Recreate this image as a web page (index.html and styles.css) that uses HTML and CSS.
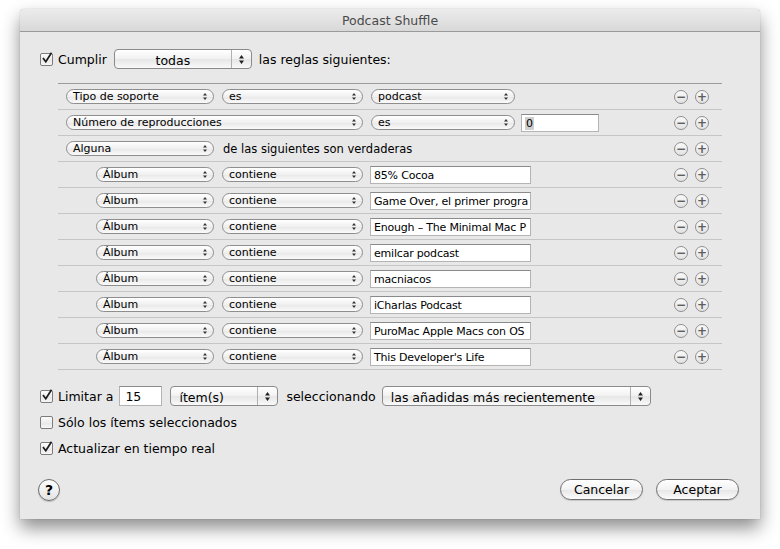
FILE: index.html
```html
<!DOCTYPE html>
<html>
<head>
<meta charset="utf-8">
<link rel="stylesheet" href="styles.css">
</head>
<body>
<div class="window">
  <div class="titlebar">Podcast Shuffle</div>
  <div class="content">
    <div class="toprow">
      <span class="check on"><svg width="15" height="15" viewBox="0 0 15 15"><path d="M3 7 L5.8 10.8 L11.5 1.8" fill="none" stroke="#1c1c1c" stroke-width="1.7"/></svg></span>
      <span class="lbl">Cumplir</span>
      <span class="bigpop center w-todas"><span class="ptext">todas</span><span class="parrows"><svg width="7" height="11" viewBox="0 0 7 11"><path d="M3.5 1 L6 4.5 L1 4.5Z M3.5 10 L6 6.5 L1 6.5Z" fill="#222"/></svg></span></span>
      <span class="lbl">las reglas siguientes:</span>
    </div>

    <div class="rules">
      <div class="rule">
        <span class="pop w148"><span class="ptext">Tipo de soporte</span><svg class="sarr" width="6" height="9" viewBox="0 0 6 9"><path d="M3 1 L5 3.5 L1 3.5Z M3 8 L5 5.5 L1 5.5Z" fill="#333"/></svg></span>
        <span class="pop w141"><span class="ptext">es</span><svg class="sarr" width="6" height="9" viewBox="0 0 6 9"><path d="M3 1 L5 3.5 L1 3.5Z M3 8 L5 5.5 L1 5.5Z" fill="#333"/></svg></span>
        <span class="pop w144"><span class="ptext">podcast</span><svg class="sarr" width="6" height="9" viewBox="0 0 6 9"><path d="M3 1 L5 3.5 L1 3.5Z M3 8 L5 5.5 L1 5.5Z" fill="#333"/></svg></span>
        <span class="pm"><span class="circ">&#8722;</span><span class="circ">+</span></span>
      </div>
      <div class="rule">
        <span class="pop w297"><span class="ptext">Número de reproducciones</span><svg class="sarr" width="6" height="9" viewBox="0 0 6 9"><path d="M3 1 L5 3.5 L1 3.5Z M3 8 L5 5.5 L1 5.5Z" fill="#333"/></svg></span>
        <span class="pop w144"><span class="ptext">es</span><svg class="sarr" width="6" height="9" viewBox="0 0 6 9"><path d="M3 1 L5 3.5 L1 3.5Z M3 8 L5 5.5 L1 5.5Z" fill="#333"/></svg></span>
        <span class="field fnum"><span class="sel">0</span></span>
        <span class="pm"><span class="circ">&#8722;</span><span class="circ">+</span></span>
      </div>
      <div class="rule">
        <span class="pop w148"><span class="ptext">Alguna</span><svg class="sarr" width="6" height="9" viewBox="0 0 6 9"><path d="M3 1 L5 3.5 L1 3.5Z M3 8 L5 5.5 L1 5.5Z" fill="#333"/></svg></span>
        <span class="rlbl">de las siguientes son verdaderas</span>
        <span class="pm"><span class="circ">&#8722;</span><span class="circ">+</span></span>
      </div>

      <div class="rule sub">
        <span class="pop w118"><span class="ptext">Álbum</span><svg class="sarr" width="6" height="9" viewBox="0 0 6 9"><path d="M3 1 L5 3.5 L1 3.5Z M3 8 L5 5.5 L1 5.5Z" fill="#333"/></svg></span>
        <span class="pop w141"><span class="ptext">contiene</span><svg class="sarr" width="6" height="9" viewBox="0 0 6 9"><path d="M3 1 L5 3.5 L1 3.5Z M3 8 L5 5.5 L1 5.5Z" fill="#333"/></svg></span>
        <span class="field ftext">85% Cocoa</span>
        <span class="pm"><span class="circ">&#8722;</span><span class="circ">+</span></span>
      </div>
      <div class="rule sub">
        <span class="pop w118"><span class="ptext">Álbum</span><svg class="sarr" width="6" height="9" viewBox="0 0 6 9"><path d="M3 1 L5 3.5 L1 3.5Z M3 8 L5 5.5 L1 5.5Z" fill="#333"/></svg></span>
        <span class="pop w141"><span class="ptext">contiene</span><svg class="sarr" width="6" height="9" viewBox="0 0 6 9"><path d="M3 1 L5 3.5 L1 3.5Z M3 8 L5 5.5 L1 5.5Z" fill="#333"/></svg></span>
        <span class="field ftext">Game Over, el primer progra</span>
        <span class="pm"><span class="circ">&#8722;</span><span class="circ">+</span></span>
      </div>
      <div class="rule sub">
        <span class="pop w118"><span class="ptext">Álbum</span><svg class="sarr" width="6" height="9" viewBox="0 0 6 9"><path d="M3 1 L5 3.5 L1 3.5Z M3 8 L5 5.5 L1 5.5Z" fill="#333"/></svg></span>
        <span class="pop w141"><span class="ptext">contiene</span><svg class="sarr" width="6" height="9" viewBox="0 0 6 9"><path d="M3 1 L5 3.5 L1 3.5Z M3 8 L5 5.5 L1 5.5Z" fill="#333"/></svg></span>
        <span class="field ftext">Enough – The Minimal Mac P</span>
        <span class="pm"><span class="circ">&#8722;</span><span class="circ">+</span></span>
      </div>
      <div class="rule sub">
        <span class="pop w118"><span class="ptext">Álbum</span><svg class="sarr" width="6" height="9" viewBox="0 0 6 9"><path d="M3 1 L5 3.5 L1 3.5Z M3 8 L5 5.5 L1 5.5Z" fill="#333"/></svg></span>
        <span class="pop w141"><span class="ptext">contiene</span><svg class="sarr" width="6" height="9" viewBox="0 0 6 9"><path d="M3 1 L5 3.5 L1 3.5Z M3 8 L5 5.5 L1 5.5Z" fill="#333"/></svg></span>
        <span class="field ftext">emilcar podcast</span>
        <span class="pm"><span class="circ">&#8722;</span><span class="circ">+</span></span>
      </div>
      <div class="rule sub">
        <span class="pop w118"><span class="ptext">Álbum</span><svg class="sarr" width="6" height="9" viewBox="0 0 6 9"><path d="M3 1 L5 3.5 L1 3.5Z M3 8 L5 5.5 L1 5.5Z" fill="#333"/></svg></span>
        <span class="pop w141"><span class="ptext">contiene</span><svg class="sarr" width="6" height="9" viewBox="0 0 6 9"><path d="M3 1 L5 3.5 L1 3.5Z M3 8 L5 5.5 L1 5.5Z" fill="#333"/></svg></span>
        <span class="field ftext">macniacos</span>
        <span class="pm"><span class="circ">&#8722;</span><span class="circ">+</span></span>
      </div>
      <div class="rule sub">
        <span class="pop w118"><span class="ptext">Álbum</span><svg class="sarr" width="6" height="9" viewBox="0 0 6 9"><path d="M3 1 L5 3.5 L1 3.5Z M3 8 L5 5.5 L1 5.5Z" fill="#333"/></svg></span>
        <span class="pop w141"><span class="ptext">contiene</span><svg class="sarr" width="6" height="9" viewBox="0 0 6 9"><path d="M3 1 L5 3.5 L1 3.5Z M3 8 L5 5.5 L1 5.5Z" fill="#333"/></svg></span>
        <span class="field ftext">iCharlas Podcast</span>
        <span class="pm"><span class="circ">&#8722;</span><span class="circ">+</span></span>
      </div>
      <div class="rule sub">
        <span class="pop w118"><span class="ptext">Álbum</span><svg class="sarr" width="6" height="9" viewBox="0 0 6 9"><path d="M3 1 L5 3.5 L1 3.5Z M3 8 L5 5.5 L1 5.5Z" fill="#333"/></svg></span>
        <span class="pop w141"><span class="ptext">contiene</span><svg class="sarr" width="6" height="9" viewBox="0 0 6 9"><path d="M3 1 L5 3.5 L1 3.5Z M3 8 L5 5.5 L1 5.5Z" fill="#333"/></svg></span>
        <span class="field ftext">PuroMac Apple Macs con OS</span>
        <span class="pm"><span class="circ">&#8722;</span><span class="circ">+</span></span>
      </div>
      <div class="rule sub">
        <span class="pop w118"><span class="ptext">Álbum</span><svg class="sarr" width="6" height="9" viewBox="0 0 6 9"><path d="M3 1 L5 3.5 L1 3.5Z M3 8 L5 5.5 L1 5.5Z" fill="#333"/></svg></span>
        <span class="pop w141"><span class="ptext">contiene</span><svg class="sarr" width="6" height="9" viewBox="0 0 6 9"><path d="M3 1 L5 3.5 L1 3.5Z M3 8 L5 5.5 L1 5.5Z" fill="#333"/></svg></span>
        <span class="field ftext">This Developer's Life</span>
        <span class="pm"><span class="circ">&#8722;</span><span class="circ">+</span></span>
      </div>
    </div>

    <div class="opt first">
      <span class="check on"><svg width="15" height="15" viewBox="0 0 15 15"><path d="M3 7 L5.8 10.8 L11.5 1.8" fill="none" stroke="#1c1c1c" stroke-width="1.7"/></svg></span>
      <span class="lbl">Limitar a</span>
      <span class="bfield">15</span>
      <span class="bigpop w-items"><span class="ptext">ítem(s)</span><span class="parrows"><svg width="7" height="11" viewBox="0 0 7 11"><path d="M3.5 1 L6 4.5 L1 4.5Z M3.5 10 L6 6.5 L1 6.5Z" fill="#222"/></svg></span></span>
      <span class="lbl sel-lbl">seleccionando</span>
      <span class="bigpop w-sel"><span class="ptext">las añadidas más recientemente</span><span class="parrows"><svg width="7" height="11" viewBox="0 0 7 11"><path d="M3.5 1 L6 4.5 L1 4.5Z M3.5 10 L6 6.5 L1 6.5Z" fill="#222"/></svg></span></span>
    </div>
    <div class="opt">
      <span class="check"></span>
      <span class="lbl">Sólo los ítems seleccionados</span>
    </div>
    <div class="opt">
      <span class="check on"><svg width="15" height="15" viewBox="0 0 15 15"><path d="M3 7 L5.8 10.8 L11.5 1.8" fill="none" stroke="#1c1c1c" stroke-width="1.7"/></svg></span>
      <span class="lbl">Actualizar en tiempo real</span>
    </div>

    <div class="footer">
      <span class="help">?</span>
      <span class="btn">Cancelar</span>
      <span class="btn">Aceptar</span>
    </div>
  </div>
</div>
</body>
</html>
```
FILE: styles.css
```css
* { box-sizing: border-box; }
html, body { margin: 0; padding: 0; background: #fff; }
body {
  font-family: "DejaVu Sans", "Liberation Sans", sans-serif;
  color: #000;
  width: 780px;
  height: 549px;
  overflow: hidden;
}
.window {
  margin: 9px 0 0 20px;
  width: 740px;
  height: 510px;
  background: #e8e8e8;
  border-radius: 4px 4px 0 0;
  box-shadow: 0 9px 18px rgba(0,0,0,0.45), 0 0 1px rgba(0,0,0,0.35);
  display: flex;
  flex-direction: column;
}
.titlebar {
  height: 23px;
  border-bottom: 1px solid #9a9a9a;
  background: linear-gradient(#ececec, #d8d8d8);
  border-radius: 4px 4px 0 0;
  text-align: center;
  font-size: 12.5px;
  line-height: 24px;
  color: #4a4a4a;
}
.content {
  padding: 0 21px 0 20px;
  display: flex;
  flex-direction: column;
}
.toprow {
  margin-top: 17px;
  height: 20px;
  display: flex;
  align-items: center;
}
.check {
  width: 13px;
  height: 13px;
  border: 1px solid #7c7c7c;
  border-radius: 2px;
  background: linear-gradient(#fdfdfd, #e9e9e9 60%, #f7f7f7);
  position: relative;
  flex: none;
}
.check svg {
  position: absolute;
  left: -1px;
  top: -3px;
}
.lbl {
  font-size: 12.5px;
  margin-left: 5px;
  white-space: nowrap;
  padding-top: 1px;
}
.bigpop {
  height: 20px;
  border: 1px solid #8a8a8a;
  border-radius: 4px;
  background: linear-gradient(#ffffff, #f1f1f1 50%, #e6e6e6 51%, #f9f9f9);
  display: flex;
  align-items: stretch;
  font-size: 12.5px;
  flex: none;
}
.bigpop .ptext {
  flex: 1;
  line-height: 19px;
  padding-top: 1px;
  padding-left: 8px;
  white-space: nowrap;
  overflow: hidden;
}
.bigpop.center .ptext { text-align: center; padding-left: 0; }
.parrows {
  width: 20px;
  border-left: 1px solid #b0b0b0;
  display: flex;
  align-items: center;
  justify-content: center;
}
.w-todas { width: 138px; margin-left: 7px; margin-right: 2px; }
.w-items { width: 108px; margin-left: 8px; }
.w-sel { width: 269px; margin-left: 6px; }
.sel-lbl { margin-left: 8px; }

.rules {
  margin-top: 14px;
  margin-left: 18px;
  width: 664px;
  border-top: 1px solid #9c9c9c;
}
.rule {
  height: 26px;
  border-bottom: 1px solid #c6c6c6;
  display: flex;
  align-items: center;
  padding-left: 8px;
  padding-right: 13px;
}
.rule.sub { padding-left: 38px; }
.pop {
  height: 15px;
  border: 1px solid #8e8e8e;
  border-radius: 8px;
  background: linear-gradient(#ffffff, #f0f0f0 50%, #e8e8e8 52%, #fafafa);
  display: flex;
  align-items: center;
  font-size: 11px;
  margin-right: 8px;
  flex: none;
  position: relative;
}
.pop .ptext {
  flex: 1;
  padding-left: 6px;
  line-height: 13px;
  white-space: nowrap;
}
.sarr { margin-right: 5px; flex: none; }
.w148 { width: 148px; }
.w141 { width: 141px; }
.w144 { width: 144px; }
.w297 { width: 297px; }
.w118 { width: 118px; }
.rlbl { font-size: 11.5px; margin-left: 1px; white-space: nowrap; }
.field {
  height: 18px;
  background: #fff;
  border: 1px solid #b4b4b4;
  border-top-color: #8a8a8a;
  font-size: 11px;
  line-height: 17px;
  padding-left: 3px;
  white-space: nowrap;
  overflow: hidden;
  flex: none;
}
.fnum { width: 78px; margin-left: -2px; }
.ftext { width: 161px; margin-left: -1px; letter-spacing: -0.2px; }
.sel { background: #cfcfcf; padding: 0 1px; }
.pm {
  margin-left: auto;
  display: flex;
  gap: 7px;
}
.circ {
  width: 14px;
  height: 14px;
  border: 1px solid #8f8f8f;
  border-radius: 50%;
  background: linear-gradient(#fafafa, #e2e2e2);
  color: #5e5e5e;
  font-size: 12px;
  font-weight: bold;
  line-height: 12px;
  text-align: center;
}

.opt {
  margin-top: 6px;
  height: 20px;
  display: flex;
  align-items: center;
}
.opt.first { margin-top: 16px; }
.bfield {
  width: 43px;
  height: 20px;
  margin-left: 6px;
  background: #fff;
  border: 1px solid #b4b4b4;
  border-top-color: #8a8a8a;
  font-size: 12.5px;
  line-height: 19px;
  padding-left: 5px;
  flex: none;
}
.footer {
  margin-top: 21px;
  height: 21px;
  display: flex;
  align-items: center;
}
.help {
  width: 22px;
  height: 22px;
  margin-left: -2px;
  border: 1px solid #6e6e6e;
  border-radius: 50%;
  background: linear-gradient(#ffffff, #e3e3e3);
  box-shadow: 0 1px 1px rgba(0,0,0,0.2);
  font-size: 14px;
  font-weight: bold;
  line-height: 20px;
  text-align: center;
}
.btn {
  width: 83px;
  height: 21px;
  border: 1px solid #6f6f6f;
  border-radius: 11px;
  background: linear-gradient(#ffffff, #f2f2f2 50%, #e6e6e6 52%, #fbfbfb);
  font-size: 12.5px;
  line-height: 19px;
  text-align: center;
  box-shadow: 0 1px 1px rgba(0,0,0,0.15);
}
.help + .btn { margin-left: auto; }
.btn + .btn { margin-left: 13px; }
```
